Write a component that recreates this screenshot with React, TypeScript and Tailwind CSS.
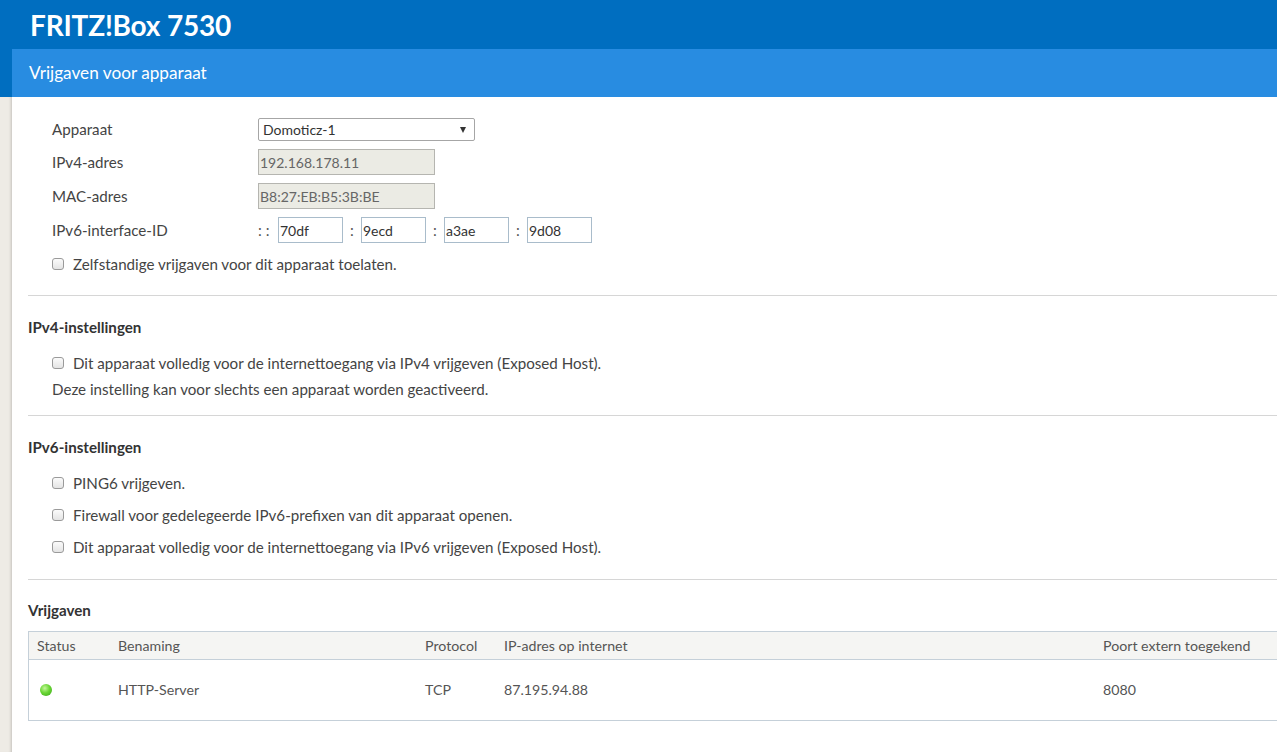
import type { ReactNode } from 'react'

const font = { fontFamily: 'Lato, "Liberation Sans", sans-serif' }

function Checkbox() {
  return (
    <span className="inline-block w-[12px] h-[12px] rounded-[3px] border border-[#9a9a9a] bg-gradient-to-b from-[#fbfbfb] to-[#e4e4e4] shrink-0" />
  )
}

function CheckRow({ label, className = 'h-[32px]' }: { label: string; className?: string }) {
  return (
    <div className={`flex items-center pl-6 ${className}`}>
      <Checkbox />
      <span className="ml-[9px]">{label}</span>
    </div>
  )
}

function FormRow({ label, className, children }: { label: string; className: string; children: ReactNode }) {
  return (
    <div className={`flex items-center pl-6 ${className}`}>
      <span className="w-[206px]">{label}</span>
      {children}
    </div>
  )
}

function Heading({ children, className }: { children: ReactNode; className: string }) {
  return <div className={`flex items-center h-[24px] font-bold text-[#333] ${className}`}>{children}</div>
}

function HexInput({ value }: { value: string }) {
  return (
    <span className="inline-flex items-center w-[65px] h-[26px] border border-[#a9bccb] bg-white pl-[1px] text-[14px] text-[#333]">
      {value}
    </span>
  )
}

export default function App() {
  return (
    <div className="h-[752px] overflow-hidden flex flex-col text-[15.15px] text-[#444] bg-white" style={font}>
      <header className="h-[49px] shrink-0 bg-[#006ec0] flex items-center pl-[30px]">
        <h1 className="text-[28px] font-bold text-white tracking-[-0.2px]">FRITZ!Box 7530</h1>
      </header>

      <div className="flex flex-1 min-h-0">
        <aside className="w-[12px] shrink-0 flex flex-col">
          <div className="h-[48px] bg-[#006ec0]" />
          <div className="flex-1 bg-[#eeebe5] shadow-[inset_-3px_0_3px_-2px_rgba(0,0,0,0.18)]" />
        </aside>

        <main className="flex-1 flex flex-col min-w-0">
          <div className="h-[48px] shrink-0 bg-[#288ce1] flex items-center pl-[17px] text-[17.2px] text-white">
            Vrijgaven voor apparaat
          </div>

          <div className="flex-1 pl-4 pt-4">
            {/* Device */}
            <FormRow label="Apparaat" className="h-[32px]">
              <span className="relative inline-flex items-center w-[217px] h-[23px] border border-[#a6a6a6] rounded-[2px] bg-white pl-[4px] text-[14px] text-[#333]">
                Domoticz-1
                <span className="absolute right-[8px] top-[8px] w-0 h-0 border-l-[3.5px] border-r-[3.5px] border-t-[6px] border-l-transparent border-r-transparent border-t-[#333]" />
              </span>
            </FormRow>
            <FormRow label="IPv4-adres" className="h-[34px]">
              <span className="inline-flex items-center w-[177px] h-[26px] border border-[#b5b5b0] bg-[#ebebe4] pl-[1px] text-[14px] text-[#666]">
                192.168.178.11
              </span>
            </FormRow>
            <FormRow label="MAC-adres" className="h-[34px]">
              <span className="inline-flex items-center w-[177px] h-[26px] border border-[#b5b5b0] bg-[#ebebe4] pl-[1px] text-[14px] text-[#666]">
                B8:27:EB:B5:3B:BE
              </span>
            </FormRow>
            <FormRow label="IPv6-interface-ID" className="h-[34px]">
              <span className="w-[20px] text-[#555]">: :</span>
              <HexInput value="70df" />
              <span className="w-[18px] text-center text-[#555]">:</span>
              <HexInput value="9ecd" />
              <span className="w-[18px] text-center text-[#555]">:</span>
              <HexInput value="a3ae" />
              <span className="w-[18px] text-center text-[#555]">:</span>
              <HexInput value="9d08" />
            </FormRow>
            <CheckRow label="Zelfstandige vrijgaven voor dit apparaat toelaten." className="h-[34px]" />

            <div className="mt-[14px] h-px bg-[#d6d6d6]" />

            {/* IPv4 */}
            <Heading className="mt-[19px]">IPv4-instellingen</Heading>
            <CheckRow label="Dit apparaat volledig voor de internettoegang via IPv4 vrijgeven (Exposed Host)." className="mt-[8px] h-[32px]" />
            <div className="pl-6 h-[20px] flex items-center">Deze instelling kan voor slechts een apparaat worden geactiveerd.</div>

            <div className="mt-[16px] h-px bg-[#d6d6d6]" />

            {/* IPv6 */}
            <Heading className="mt-[19px]">IPv6-instellingen</Heading>
            <div className="mt-[8px]">
              <CheckRow label="PING6 vrijgeven." />
              <CheckRow label="Firewall voor gedelegeerde IPv6-prefixen van dit apparaat openen." />
              <CheckRow label="Dit apparaat volledig voor de internettoegang via IPv6 vrijgeven (Exposed Host)." />
            </div>

            <div className="mt-[16px] h-px bg-[#d6d6d6]" />

            {/* Port shares */}
            <Heading className="mt-[18px]">Vrijgaven</Heading>
            <div className="mt-[9px] border-l border-t border-b border-[#c5d0d9] text-[14.2px] text-[#555]">
              <div className="grid grid-cols-[89px_307px_79px_599px_1fr] h-[28px] items-center bg-[#f5f5f3] border-b border-[#c5d0d9]">
                <span className="pl-[8px]">Status</span>
                <span>Benaming</span>
                <span>Protocol</span>
                <span>IP-adres op internet</span>
                <span>Poort extern toegekend</span>
              </div>
              <div className="grid grid-cols-[89px_307px_79px_599px_1fr] h-[60px] items-center">
                <span className="pl-[11px] flex">
                  <span className="w-[12px] h-[12px] rounded-full bg-[radial-gradient(circle_at_40%_35%,#c4f79a_0%,#6ad635_45%,#38a418_100%)]" />
                </span>
                <span>HTTP-Server</span>
                <span>TCP</span>
                <span>87.195.94.88</span>
                <span>8080</span>
              </div>
            </div>
          </div>
        </main>
      </div>
    </div>
  )
}
